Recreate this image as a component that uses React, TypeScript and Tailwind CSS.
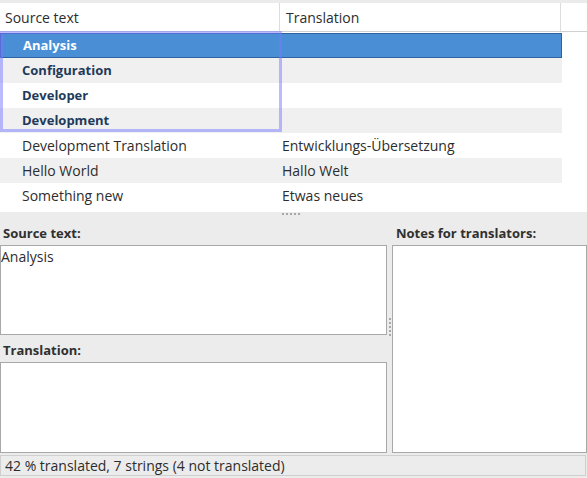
import React from 'react';

const rows = [
  { source: 'Analysis', translation: '', bold: true },
  { source: 'Configuration', translation: '', bold: true },
  { source: 'Developer', translation: '', bold: true },
  { source: 'Development', translation: '', bold: true },
  { source: 'Development Translation', translation: 'Entwicklungs-Übersetzung', bold: false },
  { source: 'Hello World', translation: 'Hallo Welt', bold: false },
  { source: 'Something new', translation: 'Etwas neues', bold: false },
];

const App: React.FC = () => {
  const selected = 0;

  return (
    <div
      className="w-[587px] h-[478px] bg-[#ececec] flex flex-col overflow-hidden text-[14px] text-[#2d2d2d]"
      style={{ fontFamily: '"Open Sans", "DejaVu Sans", sans-serif' }}
    >
      {/* string list */}
      <div className="h-[212px] bg-white flex flex-col pt-[3px] relative">
        <div className="absolute top-0 left-0 right-0 h-[3px] bg-[#ebebeb]" />
        <div className="flex h-[29px] border-b border-[#d0d0d0] shrink-0">
          <div className="w-[280px] border-r border-[#dcdcdc] pl-[5px] flex items-center">Source text</div>
          <div className="w-[281px] border-r border-[#dcdcdc] pl-[6px] flex items-center">Translation</div>
          <div className="flex-1" />
        </div>
        <div className="pt-[1px] w-[562px]">
          {rows.map((r, i) => (
            <div
              key={r.source}
              className={`flex h-[25px] items-center ${
                i === selected
                  ? 'bg-[#4a8fd6] border border-[#2f63a0]'
                  : i % 2 === 1
                  ? 'bg-[#f0f0f0]'
                  : 'bg-white'
              }`}
            >
              <div
                className={`w-[281px] pl-[22px] ${r.bold ? 'font-bold text-[13px]' : ''} ${
                  i === selected ? 'text-white' : r.bold ? 'text-[#1f3a5a]' : 'text-[#2d2d2d]'
                }`}
              >
                {r.source}
              </div>
              <div className="flex-1 pl-[1px] text-[#2d2d2d]">{r.translation}</div>
            </div>
          ))}
        </div>
        {/* rubber band selection */}
        <div className="absolute left-0 top-[31px] w-[282px] h-[101px] border-[3px] border-[#7878ff]/50 pointer-events-none" />
      </div>

      {/* splitter handle */}
      <div className="h-[4px] relative">
        <div className="absolute left-[282px] top-[1px] flex gap-[2px]">
          {[0, 1, 2, 3, 4].map((d) => (
            <div key={d} className="w-[2px] h-[2px] bg-[#a8a8a8]" />
          ))}
        </div>
      </div>

      {/* editors */}
      <div className="flex flex-1 min-h-0">
        <div className="w-[387px] flex flex-col">
          <div className="h-[29px] pl-[3px] pt-[9px] font-bold text-[13px] text-[#303030] leading-[16px]">Source text:</div>
          <div className="h-[90px] bg-white border border-[#a8a8a8] leading-[20px] pt-[1px]">Analysis</div>
          <div className="h-[28px] pl-[3px] pt-[7px] font-bold text-[13px] text-[#303030] leading-[16px]">Translation:</div>
          <div className="h-[91px] bg-white border border-[#a8a8a8]" />
        </div>
        <div className="w-[5px] flex flex-col items-center justify-center gap-[2px] pb-[16px]">
          {[0, 1, 2, 3, 4].map((d) => (
            <div key={d} className="w-[2px] h-[2px] bg-[#a8a8a8]" />
          ))}
        </div>
        <div className="flex-1 flex flex-col">
          <div className="h-[29px] pl-[4px] pt-[9px] font-bold text-[13px] text-[#303030] leading-[16px]">Notes for translators:</div>
          <div className="h-[209px] bg-white border border-[#a8a8a8]" />
        </div>
      </div>

      {/* status bar */}
      <div className="h-[25px] pt-[2px] pb-[2px] pr-[1px]">
        <div className="h-full border border-[#cfcfcf] pl-[4px] flex items-center text-[#2d2d2d]">
          42 % translated, 7 strings (4 not translated)
        </div>
      </div>
    </div>
  );
};

export default App;
